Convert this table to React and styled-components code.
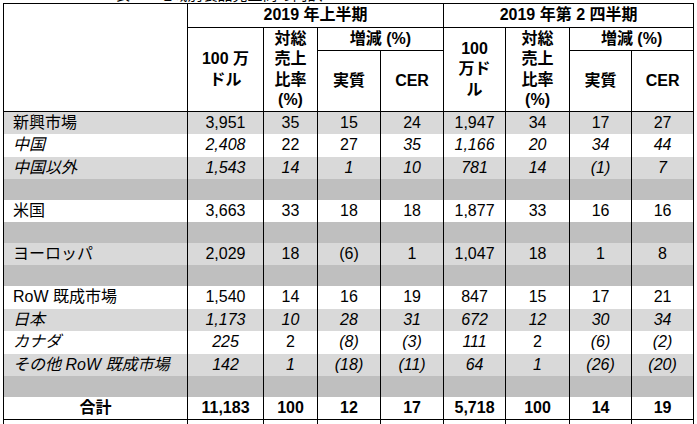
import styled, { createGlobalStyle } from "styled-components";

const GlobalStyle = createGlobalStyle`
    html, body {
        margin: 0;
        padding: 0;
        background: #fff;
    }

    body {
        font-family: "Liberation Sans", "Noto Sans CJK JP", sans-serif;
        color: #000;
    }
`;

const LINE = "1.5px solid #000";

const Page = styled.div`
    padding: 3px 0 0 3px;
    overflow: hidden;
    height: 424px;
    box-sizing: border-box;
`;

// only the foot of the caption shows above the table, as in the source
const Caption = styled.div`
    margin: -16px 0 1px;
    padding-left: 112px;
    height: 15px;
    font-size: 15px;
    line-height: 15px;
    white-space: nowrap;
`;

const Table = styled.table`
    border-collapse: collapse;
    table-layout: fixed;
    width: 690px;
    font-size: 16px;
`;

const HeadRow = styled.tr`
    height: ${p => p.$h}px;
`;

const Th = styled.th`
    border: ${LINE};
    padding: 0;
    font-weight: bold;
    line-height: 20.5px;
    text-align: center;
    vertical-align: middle;
    background: #fff;
`;

const shades = {
    light: "#d9d9d9",
    white: "#ffffff",
    dark: "#bfbfbf",
};

const BodyRow = styled.tr`
    height: ${p => (p.$shade === "dark" ? 20.5 : 22.6)}px;
    background: ${p => shades[p.$shade]};
    font-weight: ${p => (p.$bold ? "bold" : "normal")};
    border-bottom: ${p => (p.$closed ? LINE : "none")};
`;

const Td = styled.td`
    border-left: ${LINE};
    border-right: ${LINE};
    padding: 0;
    line-height: 20px;
    text-align: center;
    vertical-align: middle;
    white-space: nowrap;
    font-style: ${p => (p.$italic ? "italic" : "normal")};
`;

const Label = styled(Td)`
    text-align: ${p => (p.$center ? "center" : "left")};
    padding-left: ${p => (p.$center ? 0 : 9)}px;
`;

const widths = [184, 76, 54, 63, 63, 62, 64, 62, 62];

// u: indexes of values drawn upright in an otherwise italic row
const rows = [
    { label: "新興市場", shade: "light", v: ["3,951", "35", "15", "24", "1,947", "34", "17", "27"] },
    { label: "中国", shade: "white", italic: true, u: [1, 2], v: ["2,408", "22", "27", "35", "1,166", "20", "34", "44"] },
    { label: "中国以外", shade: "light", italic: true, v: ["1,543", "14", "1", "10", "781", "14", "(1)", "7"] },
    { shade: "dark" },
    { label: "米国", shade: "white", v: ["3,663", "33", "18", "18", "1,877", "33", "16", "16"] },
    { shade: "dark" },
    { label: "ヨーロッパ", shade: "light", v: ["2,029", "18", "(6)", "1", "1,047", "18", "1", "8"] },
    { shade: "dark" },
    { label: "RoW 既成市場", shade: "white", v: ["1,540", "14", "16", "19", "847", "15", "17", "21"] },
    { label: "日本", shade: "light", italic: true, v: ["1,173", "10", "28", "31", "672", "12", "30", "34"] },
    { label: "カナダ", shade: "white", italic: true, u: [1, 5], v: ["225", "2", "(8)", "(3)", "111", "2", "(6)", "(2)"] },
    { label: "その他 RoW 既成市場", shade: "light", italic: true, v: ["142", "1", "(18)", "(11)", "64", "1", "(26)", "(20)"] },
    { shade: "dark" },
    { label: "合計", shade: "white", bold: true, closed: true, v: ["11,183", "100", "12", "17", "5,718", "100", "14", "19"] },
    { shade: "white" },
];

function PeriodHead({ amount }) {
    return (
        <>
            <Th rowSpan={2}>{amount}</Th>
            <Th rowSpan={2}>対総<br />売上<br />比率<br />(%)</Th>
            <Th colSpan={2}>増減 (%)</Th>
        </>
    );
}

export default function App() {
    return (
        <Page>
            <GlobalStyle />
            <Caption>表 2　地域別製品売上高の内訳</Caption>
            <Table>
                <colgroup>
                    {widths.map((w, i) => <col key={i} style={{ width: w }} />)}
                </colgroup>
                <thead>
                    <HeadRow $h={24}>
                        <Th rowSpan={3}></Th>
                        <Th colSpan={4}>2019 年上半期</Th>
                        <Th colSpan={4}>2019 年第 2 四半期</Th>
                    </HeadRow>
                    <HeadRow $h={23}>
                        <PeriodHead amount={<>100 万<br />ドル</>} />
                        <PeriodHead amount={<>100<br />万ド<br />ル</>} />
                    </HeadRow>
                    <HeadRow $h={61}>
                        <Th>実質</Th>
                        <Th>CER</Th>
                        <Th>実質</Th>
                        <Th>CER</Th>
                    </HeadRow>
                </thead>
                <tbody>
                    {rows.map((r, i) => (
                        <BodyRow key={i} $shade={r.shade} $bold={r.bold} $closed={r.closed}>
                            <Label $italic={r.italic} $center={r.bold}>{r.label}</Label>
                            {(r.v || Array(8).fill("")).map((val, j) => (
                                <Td key={j} $italic={r.italic && !(r.u || []).includes(j)}>{val}</Td>
                            ))}
                        </BodyRow>
                    ))}
                </tbody>
            </Table>
        </Page>
    );
}
